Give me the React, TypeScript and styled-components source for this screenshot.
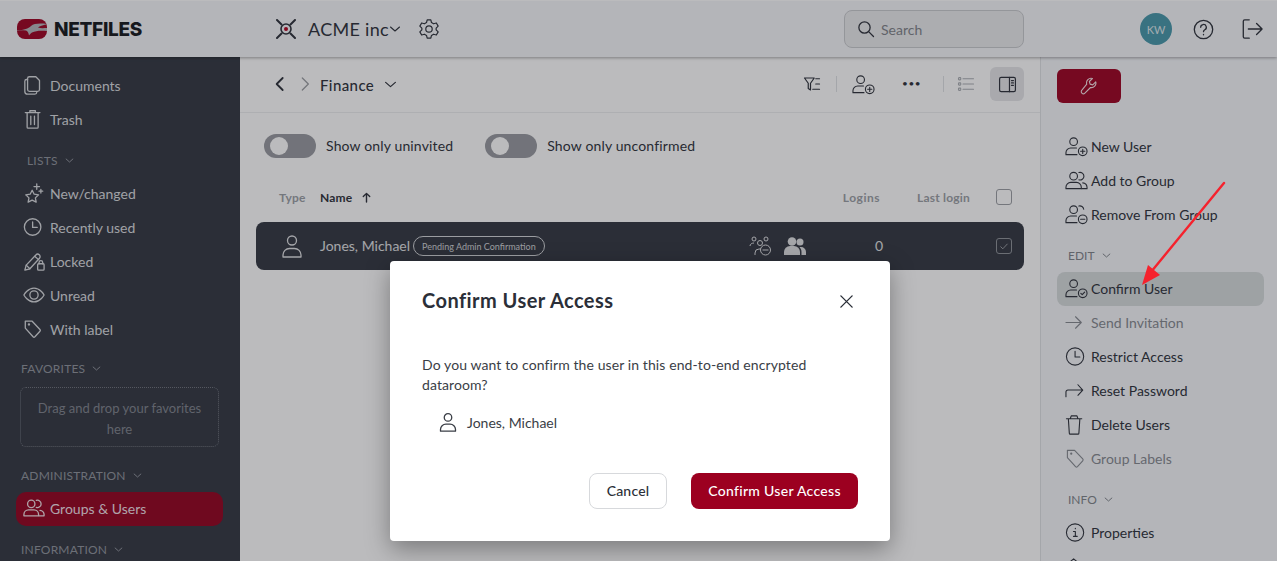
import React from "react";
import styled, { createGlobalStyle } from "styled-components";

const FONT = `Lato, "Noto Sans", sans-serif`;

const paths: Record<string, React.ReactNode> = {
  docs: (
    <g transform="translate(-2 0)">
      <path d="M9 3h7l4 4v10a2 2 0 0 1-2 2H9a2 2 0 0 1-2-2V5a2 2 0 0 1 2-2z" />
      <path d="M7 6H6a2 2 0 0 0-2 2v11a3 3 0 0 0 3 3h8a2 2 0 0 0 2-2" />
    </g>
  ),
  trash: (
    <g transform="translate(-1.500 0)">
      <path d="M4 5h16M9 5V3h6v2M6 5v16a1 1 0 0 0 1 1h10a1 1 0 0 0 1-1V5" />
      <path d="M10 9v9M14 9v9" />
    </g>
  ),
  trashPlain: <path transform="translate(-2.500 0)" d="M4 6h16M8 6l1-3h6l1 3M6 6l1 15a1 1 0 0 0 1 1h8a1 1 0 0 0 1-1l1-15" />,
  stars: (
    <>
      <path d="M10 9l2.200 4.300 4.800.7-3.500 3.300.9 4.700-4.400-2.300-4.400 2.300.9-4.700L3 14l4.800-.7z" />
      <path d="M15 2v6M12 5h6M19.500 8v4M17.500 10h4" />
    </>
  ),
  clock: (
    <>
      <circle cx="10.500" cy="12" r="9" />
      <path d="M10.500 6.500v6h5" />
    </>
  ),
  lockpen: (
    <>
      <path d="M2 22l1.500-5.500L14 5.500a2.500 2.500 0 0 1 4 3.500L7.500 20.500z" />
      <path d="M13 7l4 3.500M3.500 16.500l4 4" />
      <rect x="16" y="15" width="7" height="7" rx="1" />
      <path d="M17.500 15v-1.500a2 2 0 0 1 4 0V15" />
    </>
  ),
  eye: (
    <>
      <path d="M1 12s4-7.500 11-7.500S23 12 23 12s-4 7.500-11 7.500S1 12 1 12z" />
      <circle cx="12" cy="12" r="4.500" />
    </>
  ),
  tag: (
    <>
      <path d="M2.500 3.500h7.500l8.500 9a1.500 1.500 0 0 1 0 2L13 20.500a1.500 1.500 0 0 1-2 0L2.500 11z" />
      <circle cx="6.500" cy="7" r=".6" />
    </>
  ),
  users: (
    <>
      <circle cx="9" cy="7.500" r="4" />
      <path d="M1 20.500v-1.500A5 5 0 0 1 6 14h6a5 5 0 0 1 5 5v1.500z" />
      <path d="M14.500 3.700a4 4 0 1 1 0 7.600M18.500 14.500a5 5 0 0 1 4.500 4.500v1.500h-5.500" />
    </>
  ),
  userPlus: (
    <>
      <circle cx="9" cy="7" r="4" />
      <path d="M12 13.500H6A5 5 0 0 0 1 18.500v2h11.500" />
      <circle cx="18.500" cy="17" r="4.500" />
      <path d="M18.500 14.800v4.400M16.300 17h4.400" />
    </>
  ),
  userCheck: (
    <>
      <circle cx="9" cy="7" r="4" />
      <path d="M12 13.500H6A5 5 0 0 0 1 18.500v2h11.500" />
      <circle cx="18.500" cy="17" r="4.500" />
      <path d="M16.500 17l1.500 1.500 2.500-2.800" />
    </>
  ),
  usersMinus: (
    <>
      <circle cx="9" cy="7" r="4" />
      <path d="M12 13.500H6A5 5 0 0 0 1 18.500v2h11.500" />
      <path d="M14.500 3.200a4 4 0 0 1 5 3.300" />
      <circle cx="18.500" cy="17" r="4.500" />
      <path d="M16.300 17h4.400" />
    </>
  ),
  arrowRight: <path d="M1 12h15.500M11 6l6 6-6 6" />,
  share: <path d="M1 18.500v-5a2 2 0 0 1 2-2h15.500M13.500 6l5 5.500-5 5.500" />,
  info: (
    <>
      <circle cx="10.500" cy="12" r="9" />
      <path d="M8.800 11h2v5M8.800 16h4M10.800 7.500v.5" />
    </>
  ),
  filter: (
    <>
      <path d="M2 4h13l-5 7v9l-3-2v-7z" />
      <path d="M17 5h5M17 12h5M13 19h9" />
    </>
  ),
  list: (
    <>
      <rect x="2" y="3.500" width="3" height="3" rx=".8" />
      <rect x="2" y="10.500" width="3" height="3" rx=".8" />
      <rect x="2" y="17.500" width="3" height="3" rx=".8" />
      <path d="M8 5h14M8 12h14M8 19h14" />
    </>
  ),
  panel: (
    <>
      <rect x="2" y="3" width="20" height="18" rx="2" />
      <path d="M14.500 3v18M17 7h2.500M17 10h2.500M17 13h2.500" />
    </>
  ),
  wrench: (
    <path d="M21 6.500l-4 4-3.500-1-1-3.500 4-4a6 6 0 0 0-7.500 7.500L2.500 17.500a2.800 2.800 0 0 0 4 4L14 14a6 6 0 0 0 7-7.500z" />
  ),
  gear: (
    <>
      <circle cx="12" cy="12" r="3.500" />
      <path d="M10 2h4l.7 3 2.300 1.300 3-.9 2 3.500-2.200 2.100v2l2.200 2.100-2 3.500-3-.9L14.700 19l-.7 3h-4l-.7-3L7 17.700l-3 .9-2-3.500L4.200 13v-2L2 8.900l2-3.500 3 .9L9.300 5z" />
    </>
  ),
  search: (
    <>
      <circle cx="10" cy="10" r="7.500" />
      <path d="M15.500 15.500L22 22" />
    </>
  ),
  help: (
    <>
      <circle cx="12" cy="12" r="10.500" />
      <path d="M8.800 9.500a3.200 3.200 0 1 1 4.700 2.800c-1 .6-1.500 1.200-1.500 2.200M12 17.500v.5" />
    </>
  ),
  logout: <path d="M9 2H4a1.500 1.500 0 0 0-1.500 1.500v17A1.500 1.500 0 0 0 4 22h5M8 12h15M17 6l6 6-6 6" />,
  person: (
    <>
      <circle cx="12" cy="6.500" r="4.500" />
      <path d="M3 23v-2a6.500 6.500 0 0 1 6.500-6.500h5A6.500 6.500 0 0 1 21 21v2z" />
    </>
  ),
  close: <path d="M3 3l18 18M21 3L3 21" />,
  chevronDown: <path d="M3 8l9 8 9-8" />,
  chevronLeft: <path d="M16 3l-9 9 9 9" />,
  chevronRight: <path d="M8 3l9 9-9 9" />,
  sortUp: <path d="M12 22V3M5 10l7-7 7 7" />,
  peek: <path d="M3 22V9l6-5 6 5v13" />,
};

const Icon = ({ name, size = 22, weight = 1.3 }: { name: string; size?: number; weight?: number }) => (
  <svg
    width={size}
    height={size}
    viewBox="0 0 24 24"
    fill="none"
    stroke="currentColor"
    strokeWidth={(weight * 24) / size}
    strokeLinecap="round"
    strokeLinejoin="round"
  >
    {paths[name]}
  </svg>
);

const Logo = () => (
  <svg width="30" height="20" viewBox="0 0 30 20">
    <rect width="30" height="20" rx="8" fill="#9c0020" />
    <path d="M-1 11.500c8-.5 12-1.500 15-4.500 3-2.500 8-3 17-2-5 1-8 2-10 3.500 3 1 6 .5 9 .5v3c-6-.5-11-.5-15 1.500-1 .7-2 1.500-3 3-.5-2.500-1-4-3-5-3-.7-6-.7-10-.5z" fill="#b5b6ba" />
  </svg>
);

const AcmeMark = () => (
  <svg width="20" height="20" viewBox="0 0 20 20" fill="none">
    <path d="M1 1l4.500 4.500M19 1l-4.500 4.500M1 19l4.500-4.500M19 19l-4.500-4.500" stroke="#2b2f38" strokeWidth="2" strokeLinecap="round" />
    <circle cx="10" cy="10" r="5" stroke="#2b2f38" strokeWidth="1.600" />
    <circle cx="10" cy="10" r="2" fill="#b3001f" />
  </svg>
);

const TeamSolid = () => (
  <svg width="22" height="18" viewBox="0 0 22 18" fill="currentColor">
    <circle cx="8" cy="4.500" r="4.300" />
    <circle cx="16" cy="5" r="3.500" />
    <path d="M0 18v-3a6 6 0 0 1 6-6h4a6 6 0 0 1 6 6v3z" />
    <path d="M17.500 18v-3c0-2-.7-3.500-2-5h1.500a5 5 0 0 1 5 5v3z" />
  </svg>
);

const TeamOutline = () => (
  <svg width="23" height="20" viewBox="0 0 23 20" fill="none" stroke="currentColor" strokeWidth="1">
    <circle cx="5" cy="3" r="2" />
    <circle cx="17" cy="3" r="2" />
    <circle cx="11" cy="7" r="2.500" />
    <path d="M1 10c0-2 2-3 4-3M6 19v-2a4 4 0 0 1 4-4h2" />
    <circle cx="16.500" cy="14" r="5" />
    <path d="M13.500 14h6" />
  </svg>
);

const sideTop = [
  { icon: "docs", label: "Documents" },
  { icon: "trash", label: "Trash" },
];
const sideLists = [
  { icon: "stars", label: "New/changed" },
  { icon: "clock", label: "Recently used" },
  { icon: "lockpen", label: "Locked" },
  { icon: "eye", label: "Unread" },
  { icon: "tag", label: "With label" },
];
const panelUsers = [
  { icon: "userPlus", label: "New User" },
  { icon: "users", label: "Add to Group" },
  { icon: "usersMinus", label: "Remove From Group" },
];
const panelEdit = [
  { icon: "userCheck", label: "Confirm User", active: true },
  { icon: "arrowRight", label: "Send Invitation", muted: true },
  { icon: "clock", label: "Restrict Access" },
  { icon: "share", label: "Reset Password" },
  { icon: "trashPlain", label: "Delete Users" },
  { icon: "tag", label: "Group Labels", muted: true },
];

export default () => {
  return (
    <Page>
      <GlobalStyle />
      <Header>
        <Brand>
          <Logo />
          <BrandName>NETFILES</BrandName>
        </Brand>
        <Company>
          <AcmeMark />
          <CompanyName>ACME inc</CompanyName>
          <Icon name="chevronDown" size={12} weight={1.1} />
          <GearSlot>
            <Icon name="gear" size={22} weight={1.2} />
          </GearSlot>
        </Company>
        <SearchBox>
          <Icon name="search" size={18} weight={1.3} />
          <SearchText>Search</SearchText>
        </SearchBox>
        <Avatar>KW</Avatar>
        <HeaderIcon $gap={21}>
          <Icon name="help" size={21} weight={1.3} />
        </HeaderIcon>
        <HeaderIcon $gap={27}>
          <Icon name="logout" size={22} weight={1.3} />
        </HeaderIcon>
      </Header>
      <Body>
        <Sidebar>
          {sideTop.map((i) => (
            <SideRow key={i.label}>
              <Icon name={i.icon} />
              {i.label}
            </SideRow>
          ))}
          <SideHeading $indent={11} $top={14} $bottom={6}>
            LISTS <Icon name="chevronDown" size={9} weight={1} />
          </SideHeading>
          {sideLists.map((i) => (
            <SideRow key={i.label}>
              <Icon name={i.icon} />
              {i.label}
            </SideRow>
          ))}
          <SideHeading $indent={5} $top={12} $bottom={8}>
            FAVORITES <Icon name="chevronDown" size={9} weight={1} />
          </SideHeading>
          <DropBox>Drag and drop your favorites here</DropBox>
          <SideHeading $indent={5} $top={19} $bottom={6}>
            ADMINISTRATION <Icon name="chevronDown" size={9} weight={1} />
          </SideHeading>
          <SideRow $active>
            <Icon name="users" />
            Groups &amp; Users
          </SideRow>
          <SideHeading $indent={5} $top={14} $bottom={6}>
            INFORMATION <Icon name="chevronDown" size={9} weight={1} />
          </SideHeading>
        </Sidebar>
        <Main>
          <Toolbar>
            <NavIcon>
              <Icon name="chevronLeft" size={16} weight={1.8} />
            </NavIcon>
            <NavIcon $muted>
              <Icon name="chevronRight" size={16} weight={1.3} />
            </NavIcon>
            <FolderName>Finance</FolderName>
            <Icon name="chevronDown" size={13} weight={1.2} />
            <ToolGroup>
              <Icon name="filter" size={18} weight={1.2} />
              <ToolSep />
              <Icon name="userPlus" size={23} weight={1.1} />
              <Dots>•••</Dots>
              <ToolSep />
              <ToolMuted>
                <Icon name="list" size={18} weight={1.1} />
              </ToolMuted>
              <ToolButton>
                <Icon name="panel" size={19} weight={1.2} />
              </ToolButton>
            </ToolGroup>
          </Toolbar>
          <Filters>
            <Toggle>
              <Switch />
              Show only uninvited
            </Toggle>
            <Toggle>
              <Switch />
              Show only unconfirmed
            </Toggle>
          </Filters>
          <TableHead>
            <TypeHead>Type</TypeHead>
            <NameHead>
              Name <Icon name="sortUp" size={11} weight={1.4} />
            </NameHead>
            <LoginsHead>Logins</LoginsHead>
            <LastHead>Last login</LastHead>
            <Check />
          </TableHead>
          <UserRow>
            <RowPerson>
              <Icon name="person" size={24} weight={1.3} />
            </RowPerson>
            <RowName>Jones, Michael</RowName>
            <Badge>Pending Admin Confirmation</Badge>
            <RowIcons>
              <TeamOutline />
              <TeamSolid />
            </RowIcons>
            <RowCount>0</RowCount>
            <Check $dark>
              <svg width="10" height="10" viewBox="0 0 10 10" fill="none" stroke="currentColor" strokeWidth="0.8">
                <path d="M1.500 5.500l2.300 2.300 4.700-5" />
              </svg>
            </Check>
          </UserRow>
        </Main>
        <Panel>
          <WrenchButton>
            <Icon name="wrench" size={18} weight={1.1} />
          </WrenchButton>
          <PanelList>
            {panelUsers.map((i) => (
              <PanelRow key={i.label}>
                <Icon name={i.icon} size={23} weight={1.1} />
                {i.label}
              </PanelRow>
            ))}
          </PanelList>
          <PanelHeading>
            EDIT <Icon name="chevronDown" size={9} weight={1} />
          </PanelHeading>
          {panelEdit.map((i) => (
            <PanelRow key={i.label} $active={i.active} $muted={i.muted}>
              <Icon name={i.icon} size={23} weight={1.1} />
              {i.label}
            </PanelRow>
          ))}
          <PanelHeading>
            INFO <Icon name="chevronDown" size={9} weight={1} />
          </PanelHeading>
          <PanelRow>
            <Icon name="info" size={23} weight={1.1} />
            Properties
          </PanelRow>
          <PanelRow>
            <Icon name="peek" size={23} weight={1.1} />
          </PanelRow>
        </Panel>
      </Body>
      <Overlay>
        <Dialog>
          <DialogHead>
            <DialogTitle>Confirm User Access</DialogTitle>
            <Icon name="close" size={15} weight={1.4} />
          </DialogHead>
          <DialogText>Do you want to confirm the user in this end-to-end encrypted dataroom?</DialogText>
          <DialogUser>
            <Icon name="person" size={20} weight={1.3} />
            Jones, Michael
          </DialogUser>
          <DialogActions>
            <CancelButton>Cancel</CancelButton>
            <ConfirmButton>Confirm User Access</ConfirmButton>
          </DialogActions>
        </Dialog>
      </Overlay>
      <Annotation width="1277" height="561" viewBox="0 0 1277 561">
        <path d="M1224 183L1151 272" stroke="#f5222d" strokeWidth="2.400" strokeLinecap="round" />
        <path d="M1142 285l6-20 12 10z" fill="#f5222d" />
      </Annotation>
    </Page>
  );
};

const GlobalStyle = createGlobalStyle`
  html, body {
    margin: 0;
    padding: 0;
    height: 100%;
    overflow: hidden;
    font-family: ${FONT};
    font-size: 14px;
    color: #2b2f38;
  }
  #root {
    height: 100%;
  }
`;

const Page = styled.div`
  position: relative;
  height: 100vh;
  display: flex;
  flex-direction: column;
  overflow: hidden;
  background: #fff;
`;

const Header = styled.header`
  height: 57px;
  flex: none;
  box-sizing: border-box;
  display: flex;
  align-items: center;
  padding: 0 14px 0 17px;
  background: #f5f7fa;
  border-top: 1px solid #fff;
  box-shadow: 0 1px 3px rgba(0, 0, 0, 0.35);
  position: relative;
  z-index: 1;
`;

const Brand = styled.div`
  width: 259px;
  display: flex;
  align-items: center;
  gap: 7px;
`;

const BrandName = styled.span`
  font-family: Inter, sans-serif;
  font-weight: 800;
  font-size: 19px;
  letter-spacing: -0.3px;
  color: #14161a;
`;

const Company = styled.div`
  display: flex;
  align-items: center;
  flex: 1;
`;

const CompanyName = styled.span`
  font-size: 18px;
  margin-left: 12px;
  letter-spacing: 0.3px;
  padding-bottom: 1px;
`;

const GearSlot = styled.span`
  display: flex;
  margin-left: 17px;
`;

const SearchBox = styled.div`
  width: 180px;
  height: 38px;
  box-sizing: border-box;
  display: flex;
  align-items: center;
  gap: 6px;
  padding-left: 12px;
  background: #eaebed;
  border: 1px solid #c8cacd;
  border-radius: 8px;
  margin-right: 116px;
`;

const SearchText = styled.span`
  font-size: 14px;
  color: #7e8288;
`;

const Avatar = styled.div`
  width: 32px;
  height: 32px;
  border-radius: 50%;
  background: #4697aa;
  color: #dfe8ea;
  font-size: 11px;
  display: flex;
  align-items: center;
  justify-content: center;
`;

const HeaderIcon = styled.span<{ $gap: number }>`
  display: flex;
  margin-left: ${({ $gap }) => $gap}px;
`;

const Body = styled.div`
  flex: 1;
  display: flex;
  min-height: 0;
`;

const Sidebar = styled.aside`
  width: 240px;
  flex: none;
  box-sizing: border-box;
  padding: 12px 17px 0 16px;
  background: #313640;
  color: #d9dbde;
`;

const SideRow = styled.div<{ $active?: boolean }>`
  height: 34px;
  box-sizing: border-box;
  padding: 0 0 2px 7px;
  display: flex;
  align-items: center;
  gap: 5px;
  border-radius: 10px;
  background: ${({ $active }) => ($active ? "#92001e" : "transparent")};
  color: ${({ $active }) => ($active ? "#f0dfe3" : "inherit")};
  svg {
    flex: none;
  }
`;

const SideHeading = styled.div<{ $indent: number; $top: number; $bottom: number }>`
  height: 20px;
  box-sizing: border-box;
  padding-bottom: 2px;
  display: flex;
  align-items: center;
  gap: 7px;
  font-size: 12px;
  letter-spacing: 0.2px;
  color: #8f939b;
  padding-left: ${({ $indent }) => $indent}px;
  margin: ${({ $top, $bottom }) => `${$top}px 0 ${$bottom}px`};
`;

const DropBox = styled.div`
  height: 60px;
  box-sizing: border-box;
  margin: 0 4px;
  padding: 10px 12px 0;
  border: 1px dotted #6d717a;
  border-radius: 6px;
  text-align: center;
  font-size: 13px;
  line-height: 21px;
  color: #7e828b;
`;

const Main = styled.main`
  flex: 1;
  min-width: 0;
  background: #fff;
`;

const Toolbar = styled.div`
  height: 56px;
  box-sizing: border-box;
  display: flex;
  align-items: center;
  padding: 0 16px 1px 32px;
  border-bottom: 1px solid #eceef0;
`;

const NavIcon = styled.span<{ $muted?: boolean }>`
  display: flex;
  width: 25px;
  color: ${({ $muted }) => ($muted ? "#9a9da2" : "#2b2f38")};
`;

const FolderName = styled.span`
  font-size: 15px;
  font-weight: 500;
  margin: 0 10px 0 -2px;
  padding-top: 2px;
  letter-spacing: 0.4px;
`;

const ToolGroup = styled.div`
  margin-left: auto;
  display: flex;
  align-items: center;
`;

const ToolSep = styled.span`
  width: 1px;
  height: 16px;
  margin: 0 15px;
  background: #dfe1e4;
`;

const Dots = styled.span`
  font-size: 10px;
  letter-spacing: 0.5px;
  margin: 0 7px 2px 27px;
`;

const ToolMuted = styled.span`
  display: flex;
  color: #a9adb2;
  margin: 0 15px 0 -2px;
`;

const ToolButton = styled.span`
  width: 34px;
  height: 34px;
  display: flex;
  align-items: center;
  justify-content: center;
  border-radius: 6px;
  background: #e5e6e9;
`;

const Filters = styled.div`
  display: flex;
  gap: 32px;
  padding: 21px 0 0 24px;
  height: 24px;
`;

const Toggle = styled.label`
  display: flex;
  align-items: center;
  gap: 10px;
  color: #2b2f38;
  letter-spacing: 0.15px;
  line-height: 22px;
`;

const Switch = styled.span`
  width: 52px;
  height: 24px;
  box-sizing: border-box;
  padding: 3px 6px;
  border-radius: 12px;
  background: #97999f;
  &::before {
    content: "";
    display: block;
    width: 18px;
    height: 18px;
    border-radius: 50%;
    background: #fff;
  }
`;

const TableHead = styled.div`
  display: flex;
  align-items: center;
  height: 26px;
  box-sizing: border-box;
  margin-top: 27px;
  padding: 0 28px 2px 39px;
  font-size: 12px;
  font-weight: 700;
  letter-spacing: 0.2px;
  color: #9a9ea4;
`;

const TypeHead = styled.span`
  width: 41px;
`;

const NameHead = styled.span`
  display: flex;
  align-items: center;
  gap: 9px;
  color: #2b2f38;
`;

const LoginsHead = styled.span`
  margin-left: auto;
  letter-spacing: 0.5px;
`;

const LastHead = styled.span`
  margin: 0 26px 0 37px;
`;

const Check = styled.span<{ $dark?: boolean }>`
  width: 16px;
  height: 16px;
  box-sizing: border-box;
  flex: none;
  display: flex;
  align-items: center;
  justify-content: center;
  border: 1px solid ${({ $dark }) => ($dark ? "#8d9197" : "#9a9da2")};
  border-radius: 3px;
  color: #aeb1b6;
`;

const UserRow = styled.div`
  height: 48px;
  margin: 11px 16px 0;
  padding: 0 12px 0 24px;
  display: flex;
  align-items: center;
  border-radius: 8px;
  background: #313640;
  color: #e0e1e3;
`;

const RowPerson = styled.span`
  display: flex;
  width: 40px;
`;

const RowName = styled.span`
  line-height: 18px;
`;

const Badge = styled.span`
  margin-left: 3px;
  height: 20px;
  box-sizing: border-box;
  padding: 0 8px;
  display: flex;
  align-items: center;
  border: 1px solid #d2d4d7;
  border-radius: 10px;
  font-size: 9px;
  color: #d2d4d7;
`;

const RowIcons = styled.span`
  display: flex;
  align-items: center;
  gap: 12px;
  margin-left: auto;
`;

const RowCount = styled.span`
  width: 25px;
  margin: 0 96px 2px 69px;
`;

const Panel = styled.aside`
  width: 237px;
  flex: none;
  box-sizing: border-box;
  padding: 12px 13px 0 16px;
  background: #f5f7fa;
  border-left: 1px solid #dfe1e4;
  overflow: hidden;
`;

const WrenchButton = styled.div`
  width: 64px;
  height: 34px;
  display: flex;
  align-items: center;
  justify-content: center;
  border-radius: 6px;
  background: #9c0020;
  color: #f4dfe3;
`;

const PanelList = styled.div`
  margin-top: 27px;
`;

const PanelRow = styled.div<{ $active?: boolean; $muted?: boolean }>`
  height: 34px;
  box-sizing: border-box;
  padding: 0 0 2px 8px;
  display: flex;
  align-items: center;
  gap: 3px;
  border-radius: 8px;
  background: ${({ $active }) => ($active ? "#d6dbdc" : "transparent")};
  color: ${({ $muted }) => ($muted ? "#85898f" : "#2b2f38")};
`;

const PanelHeading = styled.div`
  height: 20px;
  box-sizing: border-box;
  padding: 0 0 2px 11px;
  display: flex;
  align-items: center;
  gap: 7px;
  margin: 14px 0 6px;
  font-size: 12px;
  color: #7f8389;
`;

const Overlay = styled.div`
  position: absolute;
  inset: 0;
  z-index: 3;
  background: rgba(30, 30, 36, 0.3);
  display: flex;
  justify-content: center;
  align-items: flex-start;
  padding: 261px 0 0 3px;
`;

const Annotation = styled.svg`
  position: absolute;
  inset: 0;
  z-index: 4;
  pointer-events: none;
`;

const Dialog = styled.div`
  width: 500px;
  height: 280px;
  box-sizing: border-box;
  padding: 0 32px;
  background: #fff;
  border-radius: 4px;
  box-shadow: 0 8px 24px rgba(0, 0, 0, 0.35);
`;

const DialogHead = styled.div`
  height: 80px;
  display: flex;
  align-items: center;
  justify-content: space-between;
  padding-right: 4px;
`;

const DialogTitle = styled.h2`
  margin: 0 0 2px;
  font-size: 20px;
  font-weight: 700;
  letter-spacing: 0.45px;
  color: #2b2f38;
`;

const DialogText = styled.p`
  margin: 14px 0 0;
  line-height: 20px;
  letter-spacing: 0.1px;
  color: #3a3e46;
`;

const DialogUser = styled.div`
  display: flex;
  align-items: center;
  gap: 9px;
  height: 24px;
  box-sizing: border-box;
  padding: 0 0 2px 16px;
  margin-top: 16px;
  color: #3a3e46;
`;

const DialogActions = styled.div`
  display: flex;
  justify-content: flex-end;
  gap: 24px;
  margin-top: 38px;
`;

const CancelButton = styled.button`
  width: 78px;
  height: 36px;
  padding: 0 0 2px;
  font: 500 14px ${FONT};
  letter-spacing: 0.2px;
  color: #2b2f38;
  background: #fff;
  border: 1px solid #d7d9dc;
  border-radius: 8px;
`;

const ConfirmButton = styled.button`
  width: 167px;
  height: 36px;
  padding: 0 0 2px;
  font: 500 14px ${FONT};
  letter-spacing: 0.3px;
  color: #fff;
  background: #9c0020;
  border: none;
  border-radius: 8px;
`;
